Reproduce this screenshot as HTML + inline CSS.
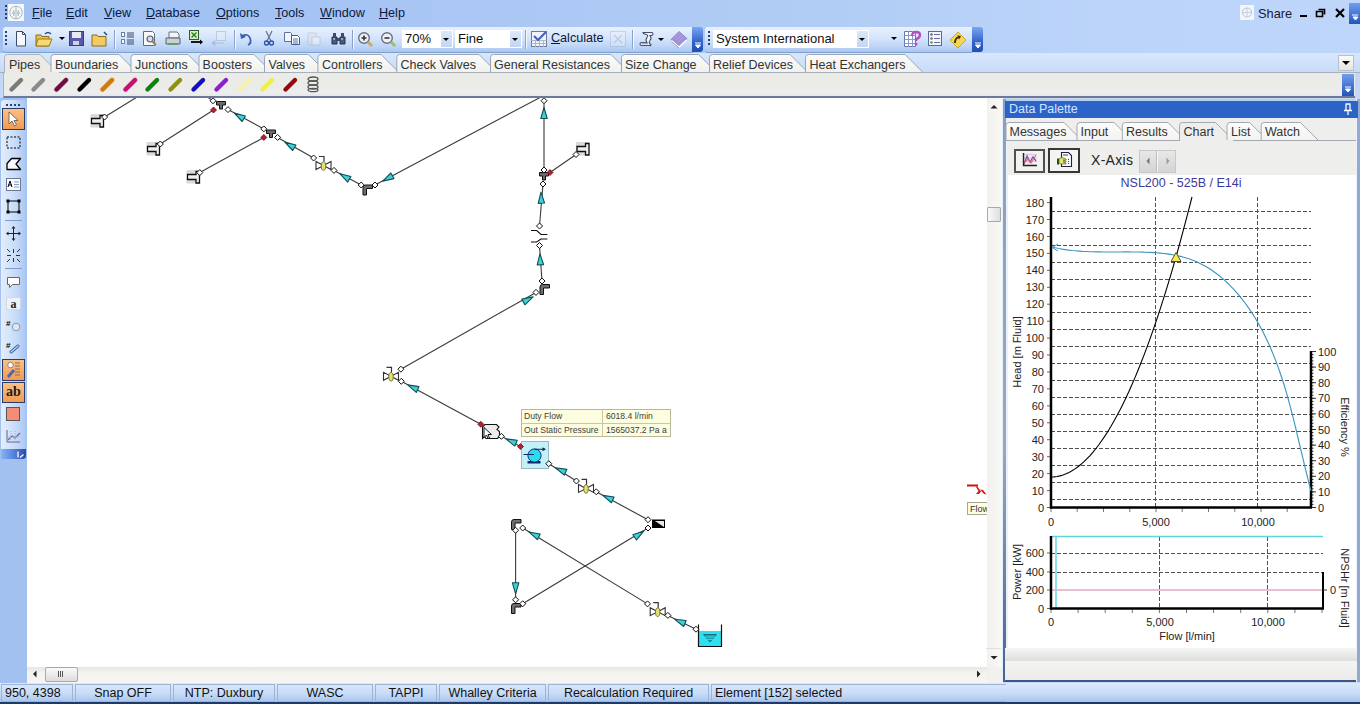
<!DOCTYPE html>
<html><head><meta charset="utf-8">
<style>
*{box-sizing:border-box;margin:0;padding:0}
html,body{width:1360px;height:704px;overflow:hidden}
body{position:relative;background:#c3d8f6;font-family:"Liberation Sans",sans-serif;font-size:12px;color:#000}
.a{position:absolute}
svg{position:absolute;overflow:visible}
#menubar{left:0;top:0;width:1360px;height:53px;background:linear-gradient(90deg,#a2c1f2 0px,#a2c2f4 215px,#a9c6f4 435px,#b1cdf5 815px,#bcd4fa 1115px,#bfd6fa 1360px)}
.mi{position:absolute;top:6px;font-size:12.6px;color:#0c1840;white-space:nowrap}
.tb{position:absolute;top:27px;height:25px;border-radius:3px 0 0 3px;background:linear-gradient(#e8f1fe 0%,#d7e6fb 40%,#c0d7f8 75%,#a8c5f1 100%);box-shadow:0 1px 0 #7f9fd0}
.grip{position:absolute;top:27px;width:11px;height:25px;background:linear-gradient(#79a6f3,#3463c8 60%,#2050b0);border-radius:0 3px 3px 0}
.gd{position:absolute;width:2px;height:2px;background:#27417a}
.sep{position:absolute;top:30px;width:1px;height:19px;background:#8aa2cc;box-shadow:1px 0 0 #f4f8ff}
.combo{position:absolute;top:30px;height:18px;background:#fff;font-size:13px;line-height:17px;padding-left:3px;color:#111;white-space:nowrap}
.cdd{position:absolute;top:1px;right:1px;width:11px;height:16px;background:linear-gradient(#dce8fa,#c2d6f4)}
.cdd:after,.darr:after{content:"";position:absolute;left:2px;top:7px;border-left:3.5px solid transparent;border-right:3.5px solid transparent;border-top:3.5px solid #000}
.darr{position:absolute;width:8px;height:16px}
#tabrow{left:0;top:53px;width:1360px;height:20px;background:linear-gradient(#d8e7fc,#c6dbf8)}
#piperow{left:3px;top:72px;width:1352px;height:26px;background:linear-gradient(#ebebe7 0%,#ebebe7 70%,#eceef0 85%,#e6e8ea 100%);border-bottom:2px solid #6a7a98;border-left:1px solid #a0b4d4}
.tab{position:absolute;top:56px;height:19px;font-size:12.5px;line-height:18px;color:#333;white-space:nowrap}
#canvas{left:27px;top:98px;width:963px;height:569px;background:#fff}
#status{left:0;top:683px;width:1360px;height:21px;background:linear-gradient(#dbe8fb,#c8dcf8 55%,#a8c4ed);border-bottom:2px solid #1d3a6a}
.sp{position:absolute;top:684px;height:18px;border:1px solid #9db4d8;font-size:12.5px;color:#111;text-align:center;line-height:17px}
</style></head><body>
<div id="menubar" class="a"></div>
<!-- logo -->
<div class="gd" style="left:5px;top:5px"></div><div class="gd" style="left:5px;top:9px"></div><div class="gd" style="left:5px;top:13px"></div><div class="gd" style="left:5px;top:17px"></div>
<div class="a" style="left:8px;top:4px;width:16px;height:17px;background:#f4f8fc"></div>
<svg style="left:8px;top:4px" width="16" height="17"><circle cx="8" cy="8.5" r="6.3" fill="none" stroke="#a8b4b8" stroke-width="1"/><path d="M4 9h3M8 3v12M9 9h3M6 6q-1 3 0 6M10 6q1 3 0 6" stroke="#a8b4b8" fill="none"/></svg>
<div class="mi" style="left:32px"><u>F</u>ile</div>
<div class="mi" style="left:66px"><u>E</u>dit</div>
<div class="mi" style="left:104px"><u>V</u>iew</div>
<div class="mi" style="left:146px"><u>D</u>atabase</div>
<div class="mi" style="left:216px"><u>O</u>ptions</div>
<div class="mi" style="left:275px"><u>T</u>ools</div>
<div class="mi" style="left:320px"><u>W</u>indow</div>
<div class="mi" style="left:379px"><u>H</u>elp</div>
<!-- right controls -->
<div class="a" style="left:1240px;top:5px;width:14px;height:15px;background:#f2f6fb"></div>
<svg style="left:1240px;top:5px" width="14" height="15"><circle cx="7" cy="7.5" r="4.5" fill="none" stroke="#b8c4cc"/><path d="M7 3v9M2.5 7.5h9" stroke="#c8d0d8"/></svg>
<div class="mi" style="left:1258px;top:6px;color:#1a1a30;font-size:12.8px">Share</div>
<div class="a" style="left:1300px;top:15px;width:7px;height:2px;background:#000"></div>
<svg style="left:1315px;top:8px" width="11" height="10"><path d="M3.5 1.5h6v5M1.5 3.5h6v5h-6z" fill="none" stroke="#000" stroke-width="1.6"/></svg>
<svg style="left:1335px;top:8px" width="10" height="10"><path d="M1 1l8 8M9 1l-8 8" stroke="#000" stroke-width="2.2"/></svg>
<div class="a" style="left:1349px;top:3px;width:11px;height:21px;background:linear-gradient(#6f9ef0,#2554b8)"></div>
<svg style="left:1351px;top:14px" width="8" height="8"><path d="M1 1h6M2 3h5l-2.5 3z" stroke="#fff" fill="#fff" stroke-width="1"/></svg>
<!-- toolbar 1 -->
<div class="tb" style="left:3px;width:690px"></div>
<div class="grip" style="left:692px"></div>
<svg style="left:694px;top:42px" width="8" height="8"><path d="M1 1h6M1.5 3h5l-2.5 3z" stroke="#fff" fill="#fff" stroke-width="1"/></svg>
<div class="gd" style="left:5px;top:31px"></div><div class="gd" style="left:5px;top:35px"></div><div class="gd" style="left:5px;top:39px"></div><div class="gd" style="left:5px;top:43px"></div>
<!-- new -->
<svg style="left:15px;top:31px" width="12" height="16"><path d="M1.5 0.5h6l3 3v11.5h-9z" fill="#f8f8fc" stroke="#3a4a6a"/><path d="M7.5 0.5v3h3" fill="none" stroke="#3a4a6a"/></svg>
<!-- open -->
<svg style="left:35px;top:31px" width="18" height="16"><path d="M1 4h5l1 1.5h7v9.5H1z" fill="#e8c050" stroke="#8a6a20"/><path d="M3 8h14l-3 7H1z" fill="#fad870" stroke="#9a7a20"/><path d="M10 3q3-3 6 0" stroke="#2a4a8a" fill="none" stroke-width="1.3"/></svg>
<div class="darr" style="left:57px;top:30px"></div>
<!-- save -->
<svg style="left:69px;top:31px" width="15" height="15"><rect x="0.5" y="0.5" width="14" height="14" fill="#5a5aa8" stroke="#3a3a80"/><rect x="3" y="1" width="9" height="6" fill="#e8e8f4"/><rect x="4" y="10" width="6" height="4" fill="#d0d0e8"/></svg>
<!-- folder -->
<svg style="left:91px;top:31px" width="17" height="16"><path d="M1 4h5l1 1.5h8v9.5H1z" fill="#f2cc60" stroke="#8a6a20"/><path d="M13 1l3 3" stroke="#2a4a8a" stroke-width="1.5"/></svg>
<div class="sep" style="left:114px"></div>
<!-- list -->
<svg style="left:121px;top:32px" width="14" height="13"><rect x="0.5" y="0.5" width="3" height="4" fill="#fff" stroke="#6a80a8"/><rect x="0.5" y="7.5" width="3" height="4" fill="#fff" stroke="#6a80a8"/><path d="M6 1h7M6 3h7M6 5h7M6 8h7M6 10h7M6 12h7" stroke="#3a4a70"/></svg>
<!-- print preview -->
<svg style="left:143px;top:31px" width="15" height="16"><path d="M0.5 0.5h9l2 2v12h-11z" fill="#fafafc" stroke="#5a6a8a"/><circle cx="7" cy="8" r="3" fill="#dde" stroke="#505a70" stroke-width="1.2"/><path d="M9 10l4 4" stroke="#a08050" stroke-width="2"/></svg>
<!-- print -->
<svg style="left:165px;top:31px" width="16" height="16"><path d="M4 1h8l2 2v4H4z" fill="#f4f4f8" stroke="#6a7080"/><path d="M1 7h14v6H1z" fill="#c8d0d8" stroke="#5a6070"/><path d="M3 12h10v2H3z" fill="#60a060"/></svg>
<!-- excel -->
<svg style="left:189px;top:30px" width="15" height="17"><rect x="0.5" y="0.5" width="9" height="9" fill="#d8f0c0" stroke="#305a30"/><path d="M2.5 2.5l5 5M7.5 2.5l-5 5" stroke="#208020" stroke-width="1.3"/><path d="M2 12h10" stroke="#000" stroke-width="1.8"/><path d="M11 9.5l3 2.5-3 2.5z" fill="#000"/></svg>
<svg style="left:211px;top:31px" width="16" height="15" opacity="0.45"><rect x="5.5" y="0.5" width="9" height="9" fill="#e8eef4" stroke="#9aa8b8"/><path d="M3 12h10M1 12l3-2v4z" stroke="#9ab0c8" stroke-width="1.5"/></svg>
<div class="sep" style="left:234px"></div>
<!-- undo -->
<svg style="left:240px;top:32px" width="13" height="14"><path d="M2 4q6-3 8 2t-2 7" fill="none" stroke="#3a60b0" stroke-width="1.8"/><path d="M0 1l1 6 5-2z" fill="#3a60b0"/></svg>
<!-- cut -->
<svg style="left:264px;top:31px" width="10" height="15"><path d="M2 0l5 10M8 0l-5 10" stroke="#607090" stroke-width="1.2"/><circle cx="2.5" cy="12" r="2" fill="none" stroke="#2a50a8" stroke-width="1.3"/><circle cx="7.5" cy="12" r="2" fill="none" stroke="#2a50a8" stroke-width="1.3"/></svg>
<!-- copy -->
<svg style="left:284px;top:32px" width="16" height="13"><path d="M0.5 0.5h6l1 1v8h-7z" fill="#f4f4fa" stroke="#6070a0"/><path d="M7.5 3.5h6l2 2v7h-8z" fill="#fff" stroke="#4a5a90"/><path d="M9 7h5M9 9h5M9 11h5" stroke="#5070b0"/></svg>
<svg style="left:307px;top:32px" width="14" height="14" opacity="0.35"><path d="M1 1h8v12H1z" fill="#e0e0e0" stroke="#a0a0a8"/><path d="M5 5h8v8H5z" fill="#fff" stroke="#a0a0b0"/></svg>
<!-- find -->
<svg style="left:331px;top:32px" width="15" height="13"><path d="M1 5h5v7H1zM9 5h5v7H9z" fill="#4a5a80" stroke="#2a3050"/><path d="M2 1h3v4H2zM10 1h3v4h-3zM6 6h3v3H6z" fill="#3a4a70"/><path d="M2 7h2M10 7h2" stroke="#e0e8f8"/></svg>
<div class="sep" style="left:352px"></div>
<!-- zoom in/out -->
<svg style="left:357px;top:31px" width="17" height="17"><circle cx="7" cy="7" r="5.3" fill="#eef0f8" stroke="#6a7080" stroke-width="1.4"/><path d="M4.5 7h5M7 4.5v5" stroke="#333" stroke-width="1.6"/><path d="M11 11l4 4" stroke="#d0a860" stroke-width="3"/></svg>
<svg style="left:380px;top:31px" width="17" height="17"><circle cx="7" cy="7" r="5.3" fill="#eef0f8" stroke="#6a7080" stroke-width="1.4"/><path d="M4.5 7h5" stroke="#333" stroke-width="1.6"/><path d="M11 11l4 4" stroke="#a0c060" stroke-width="3"/></svg>
<div class="combo" style="left:402px;width:51px">70%<div class="cdd"></div></div>
<div class="combo" style="left:455px;width:67px">Fine<div class="cdd"></div></div>
<div class="sep" style="left:525px"></div>
<!-- calculate -->
<svg style="left:531px;top:31px" width="16" height="16"><rect x="0.5" y="0.5" width="15" height="15" fill="#f0f4fa" stroke="#6a7a98"/><path d="M0.5 9.5h15M0.5 12.5h15M4.5 9v7M8.5 9v7M12.5 9v7" stroke="#a8b8d0"/><path d="M3 5l4 4 8-8" fill="none" stroke="#4860c0" stroke-width="2.2"/></svg>
<div class="mi" style="left:551px;top:31px;color:#10183a"><u>C</u>alculate</div>
<svg style="left:610px;top:31px" width="16" height="16" opacity="0.3"><rect x="0.5" y="0.5" width="15" height="15" fill="#f0f4fa" stroke="#8a9ab8"/><path d="M4 4l8 8M12 4l-8 8" stroke="#8a9ab8" stroke-width="1.5"/></svg>
<div class="sep" style="left:632px"></div>
<svg style="left:639px;top:31px" width="15" height="16"><path d="M4 1.5H12.5Q14 1.5 14 3T12.5 4.5H11Q13 7 11 9.5T12 13.5Q12 15 10.5 14.5H2.5Q1 14.5 1 13T2.5 11.5H8Q6 9 8 6.5T6 3Q4.5 3 4 1.5Z" fill="#f2f4fa" stroke="#464e6e" stroke-width="1.1"/><path d="M2.5 12.5H9" stroke="#9aa8c8" stroke-width="1.5"/></svg>
<div class="darr" style="left:656px;top:31px"></div>
<svg style="left:670px;top:30px" width="18" height="18"><path d="M1 9.5L9 1.5 17 8.5 9 16.5Z" fill="#a090d8" stroke="#8878c0" stroke-width="0.8"/><path d="M1.5 10.5L9 17 16.5 10" fill="none" stroke="#ffffff" stroke-width="1.4"/><path d="M1.5 11.5L9 18" stroke="#8a82b0" stroke-width="0.8"/><path d="M4 8l6-5.5M6 10l6-5.5M8 12l6-5.5" stroke="#b8a8e8" stroke-width="0.8"/></svg>
<!-- toolbar 2 -->
<div class="tb" style="left:705px;width:267px"></div>
<div class="grip" style="left:972px"></div>
<svg style="left:974px;top:42px" width="8" height="8"><path d="M1 1h6M1.5 3h5l-2.5 3z" stroke="#fff" fill="#fff" stroke-width="1"/></svg>
<div class="gd" style="left:708px;top:31px"></div><div class="gd" style="left:708px;top:35px"></div><div class="gd" style="left:708px;top:39px"></div><div class="gd" style="left:708px;top:43px"></div>
<div class="combo" style="left:713px;width:156px">System International<div class="cdd"></div></div>
<div class="darr" style="left:889px;top:30px"></div>
<svg style="left:904px;top:31px" width="17" height="16"><path d="M0.5 0.5h11v15h-11z" fill="#fff" stroke="#6a7aa8"/><path d="M0.5 4.5h11M0.5 8.5h11M0.5 12.5h11M4.5 0v16M8.5 0v16" stroke="#8a9ac8"/><path d="M8 5q0-4 4-4t4 3-4 4v2" fill="none" stroke="#b050c0" stroke-width="2.4"/><circle cx="12" cy="13" r="1.5" fill="#b050c0"/></svg>
<svg style="left:928px;top:31px" width="14" height="15"><rect x="0.5" y="0.5" width="13" height="14" fill="#f4f4fc" stroke="#5a6a98"/><circle cx="3.5" cy="3.5" r="1.3" fill="#6a6a8a"/><circle cx="3.5" cy="7.5" r="1.3" fill="#8a6a6a"/><circle cx="3.5" cy="11.5" r="1.3" fill="#7a8a6a"/><path d="M6 3.5h6M6 7.5h6M6 11.5h6" stroke="#6070a0"/></svg>
<svg style="left:949px;top:31px" width="18" height="18"><path d="M9 1l8 8-8 8-8-8z" fill="#f6d850" stroke="#c8a830"/><path d="M6 12q0-5 4-6" fill="none" stroke="#402a10" stroke-width="1.8"/><path d="M8.5 4l3.5 1.5-2 3z" fill="#402a10"/></svg>
<div id="tabrow" class="a"></div>
<div id="piperow" class="a"></div>
<svg style="left:0;top:53px" width="1360" height="22">
<defs><linearGradient id="tg" x1="0" y1="0" x2="0" y2="1"><stop offset="0" stop-color="#fcfcfb"/><stop offset="1" stop-color="#f0f0ec"/></linearGradient></defs>
<path d="M4.5,19.5 V4.5 Q4.5,1.5 7.5,1.5 H40 L58.0,19.5 Z" fill="#ebeae5" stroke="none"/>
<path d="M4.5,19.5 V4.5 Q4.5,1.5 7.5,1.5 H40 L58.0,19.5" fill="none" stroke="#a8b4c8"/>
<path d="M51.0,19.5 V4.5 Q51.0,1.5 54.0,1.5 H119 L137.0,19.5 Z" fill="url(#tg)" stroke="none"/>
<path d="M51.0,19.5 V4.5 Q51.0,1.5 54.0,1.5 H119 L137.0,19.5" fill="none" stroke="#9aa6b8"/>
<path d="M131.0,19.5 V4.5 Q131.0,1.5 134.0,1.5 H188 L206.0,19.5 Z" fill="url(#tg)" stroke="none"/>
<path d="M131.0,19.5 V4.5 Q131.0,1.5 134.0,1.5 H188 L206.0,19.5" fill="none" stroke="#9aa6b8"/>
<path d="M199.0,19.5 V4.5 Q199.0,1.5 202.0,1.5 H254 L272.0,19.5 Z" fill="url(#tg)" stroke="none"/>
<path d="M199.0,19.5 V4.5 Q199.0,1.5 202.0,1.5 H254 L272.0,19.5" fill="none" stroke="#9aa6b8"/>
<path d="M264.5,19.5 V4.5 Q264.5,1.5 267.5,1.5 H308.5 L326.5,19.5 Z" fill="url(#tg)" stroke="none"/>
<path d="M264.5,19.5 V4.5 Q264.5,1.5 267.5,1.5 H308.5 L326.5,19.5" fill="none" stroke="#9aa6b8"/>
<path d="M317.9,19.5 V4.5 Q317.9,1.5 320.9,1.5 H381 L399.0,19.5 Z" fill="url(#tg)" stroke="none"/>
<path d="M317.9,19.5 V4.5 Q317.9,1.5 320.9,1.5 H381 L399.0,19.5" fill="none" stroke="#9aa6b8"/>
<path d="M396.8,19.5 V4.5 Q396.8,1.5 399.8,1.5 H479 L497.0,19.5 Z" fill="url(#tg)" stroke="none"/>
<path d="M396.8,19.5 V4.5 Q396.8,1.5 399.8,1.5 H479 L497.0,19.5" fill="none" stroke="#9aa6b8"/>
<path d="M490.5,19.5 V4.5 Q490.5,1.5 493.5,1.5 H611 L629.0,19.5 Z" fill="url(#tg)" stroke="none"/>
<path d="M490.5,19.5 V4.5 Q490.5,1.5 493.5,1.5 H611 L629.0,19.5" fill="none" stroke="#9aa6b8"/>
<path d="M621.5,19.5 V4.5 Q621.5,1.5 624.5,1.5 H698.6 L716.6,19.5 Z" fill="url(#tg)" stroke="none"/>
<path d="M621.5,19.5 V4.5 Q621.5,1.5 624.5,1.5 H698.6 L716.6,19.5" fill="none" stroke="#9aa6b8"/>
<path d="M709.5,19.5 V4.5 Q709.5,1.5 712.5,1.5 H790 L808.0,19.5 Z" fill="url(#tg)" stroke="none"/>
<path d="M709.5,19.5 V4.5 Q709.5,1.5 712.5,1.5 H790 L808.0,19.5" fill="none" stroke="#9aa6b8"/>
<path d="M805.5,19.5 V4.5 Q805.5,1.5 808.5,1.5 H905 L923.0,19.5 Z" fill="url(#tg)" stroke="none"/>
<path d="M805.5,19.5 V4.5 Q805.5,1.5 808.5,1.5 H905 L923.0,19.5" fill="none" stroke="#9aa6b8"/>
<path d="M0 19.5H1360" stroke="#a8b0bc"/>
</svg>
<div class="tab" style="left:9px">Pipes</div>
<div class="tab" style="left:55px">Boundaries</div>
<div class="tab" style="left:135px">Junctions</div>
<div class="tab" style="left:202.6px">Boosters</div>
<div class="tab" style="left:268.5px">Valves</div>
<div class="tab" style="left:322px">Controllers</div>
<div class="tab" style="left:400.5px">Check Valves</div>
<div class="tab" style="left:494px">General Resistances</div>
<div class="tab" style="left:625px">Size Change</div>
<div class="tab" style="left:713px">Relief Devices</div>
<div class="tab" style="left:809.5px">Heat Exchangers</div>
<div class="a" style="left:5px;top:72px;width:54px;height:2px;background:#ebeae5"></div>
<div class="a" style="left:1338px;top:55px;width:16px;height:16px;background:linear-gradient(#fafafa,#e4e4e0);border:1px solid #b8c0cc"></div>
<svg style="left:1341px;top:60px" width="10" height="6"><path d="M1 1h8l-4 4z" fill="#000"/></svg>
<div class="a" style="left:1342px;top:74px;width:12px;height:22px;background:linear-gradient(#6f9ef0,#2554b8)"></div>
<svg style="left:1344px;top:86px" width="8" height="8"><path d="M1 1h6M1.5 3h5l-2.5 3z" stroke="#fff" fill="#fff" stroke-width="1"/></svg>
<svg style="left:9px;top:77px" width="15" height="15"><path d="M2.5 12.5L12 3" stroke="#7a7a7a" stroke-width="4.4" stroke-linecap="round"/><path d="M1 12h3" stroke="#7a7a7a" stroke-width="2"/><path d="M12 1.5v3" stroke="#7a7a7a" stroke-width="2"/></svg>
<svg style="left:31px;top:77px" width="15" height="15"><path d="M2.5 12.5L12 3" stroke="#8a8a8a" stroke-width="4.4" stroke-linecap="round"/></svg>
<svg style="left:54px;top:77px" width="15" height="15"><path d="M2.5 12.5L12 3" stroke="#f0a0d0" stroke-width="5.5" stroke-linecap="round" opacity="0.5"/><path d="M2.5 12.5L12 3" stroke="#6a1040" stroke-width="4.4" stroke-linecap="round"/><path d="M1 12h3" stroke="#6a1040" stroke-width="2"/><path d="M12 1.5v3" stroke="#6a1040" stroke-width="2"/></svg>
<svg style="left:77px;top:77px" width="15" height="15"><path d="M2.5 12.5L12 3" stroke="#000" stroke-width="4.4" stroke-linecap="round"/></svg>
<svg style="left:100px;top:77px" width="15" height="15"><path d="M2.5 12.5L12 3" stroke="#f8c070" stroke-width="5.5" stroke-linecap="round" opacity="0.5"/><path d="M2.5 12.5L12 3" stroke="#d07a10" stroke-width="4.4" stroke-linecap="round"/></svg>
<svg style="left:123px;top:77px" width="15" height="15"><path d="M2.5 12.5L12 3" stroke="#f8a0d0" stroke-width="5.5" stroke-linecap="round" opacity="0.5"/><path d="M2.5 12.5L12 3" stroke="#c01070" stroke-width="4.4" stroke-linecap="round"/></svg>
<svg style="left:145px;top:77px" width="15" height="15"><path d="M2.5 12.5L12 3" stroke="#108010" stroke-width="4.4" stroke-linecap="round"/></svg>
<svg style="left:168px;top:77px" width="15" height="15"><path d="M2.5 12.5L12 3" stroke="#909010" stroke-width="4.4" stroke-linecap="round"/></svg>
<svg style="left:191px;top:77px" width="15" height="15"><path d="M2.5 12.5L12 3" stroke="#1010c0" stroke-width="4.4" stroke-linecap="round"/></svg>
<svg style="left:214px;top:77px" width="15" height="15"><path d="M2.5 12.5L12 3" stroke="#8a20d0" stroke-width="4.4" stroke-linecap="round"/></svg>
<svg style="left:237px;top:77px" width="15" height="15"><path d="M2.5 12.5L12 3" stroke="#f4f0b0" stroke-width="4.4" stroke-linecap="round"/></svg>
<svg style="left:260px;top:77px" width="15" height="15"><path d="M2.5 12.5L12 3" stroke="#f0f040" stroke-width="4.4" stroke-linecap="round"/></svg>
<svg style="left:283px;top:77px" width="15" height="15"><path d="M2.5 12.5L12 3" stroke="#900a10" stroke-width="4.4" stroke-linecap="round"/></svg>
<svg style="left:306px;top:76px" width="14" height="17"><g fill="none" stroke="#555" stroke-width="1.3"><ellipse cx="7" cy="3" rx="5" ry="2"/><ellipse cx="7" cy="7" rx="5" ry="2"/><ellipse cx="7" cy="11" rx="5" ry="2"/><ellipse cx="7" cy="14" rx="5" ry="1.7"/></g></svg>
<!-- left dock -->
<div class="a" style="left:0;top:98px;width:27px;height:585px;background:#a3c1f0"></div>
<div class="a" style="left:1px;top:100px;width:25px;height:359px;border-radius:3px 3px 0 0;background:linear-gradient(90deg,#e3eefd,#c6dbf8 60%,#a9c6f2)"></div>
<div class="gd" style="left:6px;top:104px"></div><div class="gd" style="left:10px;top:104px"></div><div class="gd" style="left:14px;top:104px"></div><div class="gd" style="left:18px;top:104px"></div>
<div class="a" style="left:2px;top:108px;width:23px;height:22px;background:linear-gradient(#fbc088,#f29a50);border:1px solid #2b3a66"></div>
<svg style="left:8px;top:111px" width="12" height="16"><path d="M1 1v12l3-3 2.5 5 2-1-2.5-4.5h4z" fill="#fff" stroke="#555" stroke-width="0.8"/></svg>
<svg style="left:6px;top:136px" width="15" height="13"><rect x="1" y="1" width="13" height="11" fill="none" stroke="#000" stroke-dasharray="2 1.5"/></svg>
<svg style="left:6px;top:157px" width="15" height="14"><path d="M5.5 1.5h9l-4.5 5.5 4.5 5.5H1v-6z" fill="#f8f8fc" stroke="#000" stroke-width="1.3" stroke-linejoin="round"/></svg>
<svg style="left:6px;top:178px" width="15" height="14"><rect x="0.5" y="0.5" width="14" height="12" fill="#fafcff" stroke="#6a7a98"/><path d="M2 9l2-6 2 6M2.6 7h3" stroke="#000" fill="none"/><path d="M8 4h5M8 6.5h5M8 9h5" stroke="#8a9ab8"/></svg>
<svg style="left:6px;top:199px" width="15" height="15"><rect x="2" y="2" width="11" height="11" fill="none" stroke="#000"/><rect x="0.5" y="0.5" width="3" height="3" fill="#000"/><rect x="11.5" y="0.5" width="3" height="3" fill="#000"/><rect x="0.5" y="11.5" width="3" height="3" fill="#000"/><rect x="11.5" y="11.5" width="3" height="3" fill="#000"/></svg>
<div class="a" style="left:5px;top:220px;width:17px;height:1px;background:#7f9ccc"></div>
<svg style="left:6px;top:226px" width="15" height="15"><path d="M7.5 1v13M1 7.5h13" stroke="#222"/><path d="M7.5 0l-2 2.5h4zM7.5 15l-2-2.5h4zM0 7.5l2.5-2v4zM15 7.5l-2.5-2v4z" fill="#222"/></svg>
<svg style="left:6px;top:248px" width="15" height="15"><path d="M7.5 1v4M7.5 10v4M1 7.5h4M10 7.5h4M1 1l3 3M14 1l-3 3M1 14l3-3M14 14l-3-3" stroke="#333"/></svg>
<div class="a" style="left:5px;top:268px;width:17px;height:1px;background:#7f9ccc"></div>
<svg style="left:6px;top:276px" width="15" height="13"><path d="M1.5 1.5h12v7h-7l-3 3v-3h-2z" fill="#fff" stroke="#666"/></svg>
<svg style="left:6px;top:297px" width="15" height="13"><rect x="0.5" y="0.5" width="14" height="12" fill="#eef2f8" stroke="#c0c8d8" stroke-dasharray="1 1"/><text x="7.5" y="10.5" font-family="Liberation Serif" font-size="12" font-weight="bold" text-anchor="middle" fill="#222">a</text></svg>
<svg style="left:6px;top:318px" width="15" height="14"><text x="0" y="8" font-family="Liberation Sans" font-size="8" font-weight="bold" fill="#000">#</text><circle cx="10" cy="9" r="3.8" fill="#dfe6f0" stroke="#8898b0"/></svg>
<svg style="left:6px;top:340px" width="15" height="14"><text x="0" y="8" font-family="Liberation Sans" font-size="8" font-weight="bold" fill="#000">#</text><path d="M5 12l7-6" stroke="#3a5aa8" stroke-width="3" stroke-linecap="round"/><path d="M5 12l7-6" stroke="#c8d8f0" stroke-width="1.2" stroke-linecap="round"/></svg>
<div class="a" style="left:2px;top:359px;width:23px;height:22px;background:linear-gradient(#fbc088,#f29a50);border:1px solid #2b3a66"></div>
<svg style="left:6px;top:361px" width="16" height="18"><circle cx="4.5" cy="4" r="2.8" fill="#fff" stroke="#888"/><path d="M2 16l6-7" stroke="#4a6ab0" stroke-width="3"/><path d="M9 2h5M9 5h5M9 8h5M9 11h5M9 14h5" stroke="#8a6a50"/></svg>
<div class="a" style="left:2px;top:382px;width:23px;height:21px;background:linear-gradient(#fbc088,#f29a50);border:1px solid #2b3a66"></div>
<div class="a" style="left:3px;top:382px;width:21px;height:20px;font-family:'Liberation Serif';font-size:14px;font-weight:bold;text-align:center;line-height:20px;color:#1a1a1a">ab</div>
<div class="a" style="left:6px;top:407px;width:14px;height:14px;background:#f48c78;border:1px solid #555"></div>
<svg style="left:6px;top:429px" width="15" height="14"><path d="M1 1v12h13" stroke="#5a6a8a" fill="none"/><path d="M2 11l4-4 3 2 5-5" stroke="#7a5ab0" fill="none" stroke-width="1.2"/><path d="M2 8h12M5 2v10M9 2v10" stroke="#a8b4cc" stroke-dasharray="1 1"/></svg>
<div class="a" style="left:1px;top:449px;width:25px;height:10px;border-radius:0 0 3px 0;background:linear-gradient(90deg,#8ab2f4,#5a88e4 45%,#2a4aa4)"></div>
<svg style="left:16px;top:451px" width="9" height="8"><path d="M2 0.5v6" stroke="#fff" stroke-width="1.3"/><path d="M4 6.5l3.5-3" stroke="#fff" stroke-width="1.2"/></svg>
<!-- canvas -->
<div class="a" style="left:27px;top:98px;width:960px;height:569px;background:#fff"></div>
<!-- vscroll -->
<div class="a" style="left:987px;top:98px;width:16px;height:569px;background:linear-gradient(90deg,#f2f1ee,#faf9f6)"></div>
<svg style="left:990px;top:104px" width="8" height="6"><path d="M0.5 4.5l3.5-3.5 3.5 3.5z" fill="#222"/></svg>
<div class="a" style="left:987px;top:207px;width:14px;height:15px;border:1px solid #a8a8a8;border-radius:1px;background:linear-gradient(90deg,#fafafa,#dedede)"></div>
<svg style="left:990px;top:655px" width="8" height="6"><path d="M0.5 1l3.5 3.5 3.5-3.5z" fill="#222"/></svg>
<div class="a" style="left:986px;top:648px;width:15px;height:1px;background:#e0e0e0"></div>
<div class="a" style="left:987px;top:667px;width:16px;height:16px;background:#f2f1ed"></div>
<!-- hscroll -->
<div class="a" style="left:27px;top:667px;width:960px;height:16px;background:linear-gradient(#e8e7e2,#f4f3ef 40%,#f6f5f2)"></div>
<svg style="left:32px;top:670px" width="6" height="8"><path d="M4.5 0.5l-3.5 3.5 3.5 3.5z" fill="#222"/></svg>
<div class="a" style="left:45px;top:667px;width:33px;height:15px;border:1px solid #a8a8a8;border-radius:2px;background:linear-gradient(#fafafa,#dcdcdc)"></div>
<svg style="left:57px;top:671px" width="8" height="6"><path d="M1.5 0v6M3.5 0v6M5.5 0v6" stroke="#555"/></svg>
<svg style="left:976px;top:670px" width="6" height="8"><path d="M1 0.5l3.5 3.5-3.5 3.5z" fill="#222"/></svg>
<!-- status bar -->
<div id="status" class="a"></div>
<div class="sp" style="left:1px;width:72px;text-align:left;padding-left:3px">950, 4398</div>
<div class="sp" style="left:75px;width:96px">Snap OFF</div>
<div class="sp" style="left:173px;width:102px">NTP: Duxbury</div>
<div class="sp" style="left:277px;width:96px">WASC</div>
<div class="sp" style="left:375px;width:62px">TAPPI</div>
<div class="sp" style="left:439px;width:107px">Whalley Criteria</div>
<div class="sp" style="left:548px;width:161px">Recalculation Required</div>
<div class="sp" style="left:711px;width:295px;text-align:left;padding-left:3px;border-right:none">Element [152] selected</div>
<svg style="left:27px;top:98px;overflow:hidden" width="960" height="569" viewBox="27 98 960 569">
<defs>
<g id="nd"><path d="M0,-3 L3,0 0,3 -3,0Z" fill="#fff" stroke="#111" stroke-width="1" stroke-linejoin="round"/></g>
<g id="rd"><path d="M0,-3 L3,0 0,3 -3,0Z" fill="#b02030" stroke="#701018" stroke-width="0.8"/></g>
<g id="ar"><path d="M-6,0 L5,-3.2 5,3.2Z" fill="#40d0d8" stroke="#0c5058" stroke-width="1.1" stroke-linejoin="round"/></g>
<g id="tj"><path d="M-4.5,-3.5H4.5V0H1.5V4H-1.5V0H-4.5Z" fill="#6a6a6a" stroke="#111" stroke-width="1"/></g>
<g id="el"><path d="M-4.5,5V-2.5Q-4.5,-5 -2,-5H5V-1.5H-1V5Z" fill="#6e6e6e" stroke="#111" stroke-width="1"/></g>
<g id="bd"><rect x="0" y="0" width="13.5" height="13.5" fill="#dadada"/><path d="M1,4.5H9.5V1.5H13V13H9.5V9.5H1Z" fill="#eeeeee" stroke="#111" stroke-width="1.3"/></g>
<g id="vl"><path d="M-7.5,-4V4L0,0ZM7.5,-4V4L0,0Z" fill="#fff" stroke="#333" stroke-width="1.1"/><ellipse cx="0" cy="0.5" rx="2.2" ry="4.3" fill="#e6e078" stroke="#707020" stroke-width="0.9"/><path d="M-4.5,-9H0.5V-4" fill="none" stroke="#333" stroke-width="1.2"/></g>
</defs>
<path d="M104.6,117L142,94" stroke="#3a3a3a" stroke-width="1.1" fill="none"/>
<path d="M160.3,144L213.5,110" stroke="#3a3a3a" stroke-width="1.1" fill="none"/>
<path d="M199.8,172.6L263.8,137.4" stroke="#3a3a3a" stroke-width="1.1" fill="none"/>
<path d="M206,96L213,100.8" stroke="#3a3a3a" stroke-width="1.1" fill="none"/>
<path d="M228,109.6L263.8,128.9" stroke="#3a3a3a" stroke-width="1.1" fill="none"/>
<path d="M277.6,137.4L313.6,158" stroke="#3a3a3a" stroke-width="1.1" fill="none"/>
<path d="M334,170.4L361.2,185" stroke="#3a3a3a" stroke-width="1.1" fill="none"/>
<path d="M375,185L541,97" stroke="#3a3a3a" stroke-width="1.1" fill="none"/>
<path d="M544,100.7L544,170" stroke="#3a3a3a" stroke-width="1.1" fill="none"/>
<path d="M550,172.5L576,154.5" stroke="#3a3a3a" stroke-width="1.1" fill="none"/>
<path d="M543,184L539.5,226" stroke="#3a3a3a" stroke-width="1.1" fill="none"/>
<path d="M539.5,245.5L542,281" stroke="#3a3a3a" stroke-width="1.1" fill="none"/>
<path d="M536,292.4L400.9,369.2" stroke="#3a3a3a" stroke-width="1.1" fill="none"/>
<path d="M401.3,381.3L480.8,424.3" stroke="#3a3a3a" stroke-width="1.1" fill="none"/>
<path d="M501.4,436.3L520.5,446.6" stroke="#3a3a3a" stroke-width="1.1" fill="none"/>
<path d="M548.8,463.7L576.4,481" stroke="#3a3a3a" stroke-width="1.1" fill="none"/>
<path d="M596.3,491.8L648,519.7" stroke="#3a3a3a" stroke-width="1.1" fill="none"/>
<path d="M648,528L522.7,603.75" stroke="#3a3a3a" stroke-width="1.1" fill="none"/>
<path d="M515.6,599.8L515.6,530.3" stroke="#3a3a3a" stroke-width="1.1" fill="none"/>
<path d="M522.7,528L647.5,603.9" stroke="#3a3a3a" stroke-width="1.1" fill="none"/>
<path d="M667.9,615.4L696,629.2" stroke="#3a3a3a" stroke-width="1.1" fill="none"/>
<use href="#bd" x="90.5" y="114"/>
<use href="#bd" x="146.5" y="142"/>
<use href="#bd" x="186.5" y="170"/>
<use href="#bd" x="576" y="142"/>
<use href="#tj" x="221" y="105"/>
<use href="#tj" x="271" y="133.5"/>
<use href="#tj" x="544" y="176"/>
<use href="#el" x="367.5" y="190"/>
<use href="#el" x="544.5" y="289.5"/>
<use href="#el" x="516" y="524.5"/>
<use href="#el" x="516" y="608.5"/>
<use href="#vl" x="323.5" y="165.5"/>
<use href="#vl" x="391" y="376.3"/>
<use href="#vl" x="586" y="488.4"/>
<use href="#vl" x="657.7" y="611.7"/>
<use href="#ar" transform="translate(239.5,116.2) rotate(30.6)"/>
<use href="#ar" transform="translate(290.0,145.2) rotate(30.6)"/>
<use href="#ar" transform="translate(345.0,176.8) rotate(30.6)"/>
<use href="#ar" transform="translate(388.0,178.2) rotate(331.2)"/>
<use href="#ar" transform="translate(544.0,113.5) rotate(90.0)"/>
<use href="#ar" transform="translate(541.2,198.2) rotate(87.5)"/>
<use href="#ar" transform="translate(540.2,259.8) rotate(87.5)"/>
<use href="#ar" transform="translate(527.8,299.6) rotate(152.0)"/>
<use href="#ar" transform="translate(413.1,387.4) rotate(25.0)"/>
<use href="#ar" transform="translate(511.4,441.2) rotate(23.0)"/>
<use href="#ar" transform="translate(561.0,470.2) rotate(24.2)"/>
<use href="#ar" transform="translate(608.2,497.8) rotate(24.1)"/>
<use href="#ar" transform="translate(638.8,534.5) rotate(145.5)"/>
<use href="#ar" transform="translate(534.3,534.6) rotate(26.4)"/>
<use href="#ar" transform="translate(515.6,587.8) rotate(270.0)"/>
<use href="#ar" transform="translate(680.3,621.6) rotate(22.4)"/>
<path d="M531,230.5H536.7L541,234.5H547.4M531,242H536.7L541,239H547.4" fill="none" stroke="#111" stroke-width="1.1"/>
<path d="M485,424.5H496.5L499,427L497,429.5L499.5,431.5V436.5L497.5,438.5H486L484.5,436.5L482.5,438.5V427Z" fill="#ececec" stroke="#111" stroke-width="1.1"/>
<path d="M484,427.5V437.5L486.5,435L488,438.5L489.5,438L488,434.5H491.5Z" fill="#fff" stroke="#000" stroke-width="0.9"/>
<rect x="521.5" y="441.5" width="27" height="27" fill="#c4f0f8" stroke="#9ab8c8" stroke-width="1"/>
<path d="M527.5,463.5H540.5V461H527.5Z" fill="#0c2a70"/>
<circle cx="534.5" cy="455.5" r="6.6" fill="#2cdcec" stroke="#0c3a80" stroke-width="1"/>
<path d="M523.5,454.5H534M534.5,449.3H545" stroke="#0c2a60" stroke-width="1.1"/><path d="M546,449.3L542.5,447.3V451.3Z" fill="#0c2a60"/>
<rect x="652.5" y="520" width="12" height="7.5" fill="#000" stroke="#000"/><path d="M655,521H664V527Z" fill="#e8e8e8"/>
<rect x="698.5" y="631" width="23" height="15" fill="#30e0f0"/><path d="M698.5,624.5V646.5H721.5V624.5" fill="none" stroke="#111" stroke-width="1.2"/>
<path d="M703.5,634.5H716.5L710,642Z" fill="#20a0b0" stroke="#106070" stroke-width="0.8"/><path d="M705,637H715M707,639.5H713" stroke="#30e0f0" stroke-width="0.9"/>
<use href="#nd" x="104.6" y="117"/>
<use href="#nd" x="160.3" y="144"/>
<use href="#nd" x="199.8" y="172.6"/>
<use href="#nd" x="213" y="100.8"/>
<use href="#nd" x="228" y="109.6"/>
<use href="#nd" x="263.8" y="128.9"/>
<use href="#nd" x="277.6" y="137.4"/>
<use href="#nd" x="313.6" y="158"/>
<use href="#nd" x="334" y="170.4"/>
<use href="#nd" x="361.2" y="185"/>
<use href="#nd" x="375" y="185"/>
<use href="#nd" x="544" y="100.7"/>
<use href="#nd" x="544" y="170"/>
<use href="#nd" x="543" y="184"/>
<use href="#nd" x="576" y="154.5"/>
<use href="#nd" x="539.5" y="226"/>
<use href="#nd" x="539.5" y="245.5"/>
<use href="#nd" x="542" y="281"/>
<use href="#nd" x="536" y="292.4"/>
<use href="#nd" x="400.9" y="369.2"/>
<use href="#nd" x="401.3" y="381.3"/>
<use href="#nd" x="501.4" y="436.3"/>
<use href="#nd" x="548.8" y="463.7"/>
<use href="#nd" x="576.4" y="481"/>
<use href="#nd" x="596.3" y="491.8"/>
<use href="#nd" x="648" y="519.7"/>
<use href="#nd" x="648" y="528"/>
<use href="#nd" x="522.7" y="603.75"/>
<use href="#nd" x="515.6" y="599.8"/>
<use href="#nd" x="515.6" y="530.3"/>
<use href="#nd" x="522.7" y="528"/>
<use href="#nd" x="647.5" y="603.9"/>
<use href="#nd" x="667.9" y="615.4"/>
<use href="#nd" x="696" y="629.2"/>
<use href="#rd" x="213.5" y="110"/>
<use href="#rd" x="263.8" y="137.4"/>
<use href="#rd" x="550" y="172.5"/>
<use href="#rd" x="480.8" y="424.3"/>
<use href="#rd" x="520.5" y="446.6"/>
<rect x="521.5" y="409.5" width="149" height="27" fill="#fdfde0" stroke="#b8b898"/><path d="M521.5,423.5H670.5M602.5,409.5V436.5" stroke="#c8c8a8"/>
<g font-family="Liberation Sans" font-size="8.6" fill="#404040"><text x="524" y="419">Duty Flow</text><text x="524" y="433">Out Static Pressure</text><text x="606" y="419">6018.4 l/min</text><text x="606" y="433">1565037.2 Pa a</text></g>
<path d="M967,485.5H978" stroke="#d01010" stroke-width="2"/><path d="M977,486L981,491.5L979,494H976L978.5,491L976,487ZM980,489.5L984,494L986.5,494.5L983,490Z" fill="#d81818"/>
<rect x="967.5" y="502.5" width="24" height="12" fill="#fdfde4" stroke="#a8a890"/><text x="970" y="512" font-family="Liberation Sans" font-size="9" fill="#333">Flow</text>
</svg>
<div class="a" style="left:1003px;top:98px;width:357px;height:585px;background:#c9d9ef"></div>
<div class="a" style="left:1003px;top:99px;width:354px;height:583px;background:#eeeeec;border-bottom:2px solid #3e5488;border-top:2px solid #b8d0f4"></div>
<div class="a" style="left:1002px;top:99px;width:1px;height:582px;background:#e2effc"></div>
<div class="a" style="left:1003px;top:99px;width:3px;height:583px;background:linear-gradient(#8aa0c0,#98a8bc 60%,#4a6090)"></div>
<div class="a" style="left:1006px;top:140px;width:2px;height:540px;background:#eef0f8"></div>
<div class="a" style="left:1356px;top:99px;width:1px;height:583px;background:#eef2fc"></div>
<div class="a" style="left:1357px;top:99px;width:3px;height:583px;background:#92aad2"></div>
<div class="a" style="left:1005px;top:101px;width:353px;height:17px;background:#2b63c9"></div>
<div class="a" style="left:1009px;top:101px;font-size:12.5px;line-height:17px;color:#d4e6ff">Data Palette</div>
<svg style="left:1343px;top:103px" width="10" height="12"><path d="M2.5 1h5M3 1.5v6M7 1.5v6M1 7.5h8M5 8v4" stroke="#fff" stroke-width="1.3" fill="none"/></svg>
<svg style="left:0;top:119.5px" width="1360" height="24"><defs><linearGradient id="tg2" x1="0" y1="0" x2="0" y2="1"><stop offset="0" stop-color="#fdfdfc"/><stop offset="1" stop-color="#f2f2f0"/></linearGradient></defs>
<path d="M1006.0,20.5 V5.5 Q1006.0,2.5 1009.0,2.5 H1064 L1082.0,20.5 Z" fill="url(#tg2)"/><path d="M1006.0,20.5 V5.5 Q1006.0,2.5 1009.0,2.5 H1064 L1082.0,20.5" fill="none" stroke="#a4a8b0"/>
<path d="M1077.0,20.5 V5.5 Q1077.0,2.5 1080.0,2.5 H1114 L1132.0,20.5 Z" fill="url(#tg2)"/><path d="M1077.0,20.5 V5.5 Q1077.0,2.5 1080.0,2.5 H1114 L1132.0,20.5" fill="none" stroke="#a4a8b0"/>
<path d="M1122.3,20.5 V5.5 Q1122.3,2.5 1125.3,2.5 H1168 L1186.0,20.5 Z" fill="url(#tg2)"/><path d="M1122.3,20.5 V5.5 Q1122.3,2.5 1125.3,2.5 H1168 L1186.0,20.5" fill="none" stroke="#a4a8b0"/>
<path d="M1179.5,20.5 V5.5 Q1179.5,2.5 1182.5,2.5 H1215.5 L1233.5,20.5 Z" fill="#eeeeec"/><path d="M1179.5,20.5 V5.5 Q1179.5,2.5 1182.5,2.5 H1215.5 L1233.5,20.5" fill="none" stroke="#a4a8b0"/>
<path d="M1227.0,20.5 V5.5 Q1227.0,2.5 1230.0,2.5 H1249.7 L1267.7,20.5 Z" fill="url(#tg2)"/><path d="M1227.0,20.5 V5.5 Q1227.0,2.5 1230.0,2.5 H1249.7 L1267.7,20.5" fill="none" stroke="#a4a8b0"/>
<path d="M1261.2,20.5 V5.5 Q1261.2,2.5 1264.2,2.5 H1300.5 L1318.5,20.5 Z" fill="url(#tg2)"/><path d="M1261.2,20.5 V5.5 Q1261.2,2.5 1264.2,2.5 H1300.5 L1318.5,20.5" fill="none" stroke="#a4a8b0"/>
<path d="M1005 20.5H1356" stroke="#a4a8b0"/>
<path d="M1180 20.5H1233" stroke="#eeeeec" stroke-width="1.5"/>
</svg>
<div class="a" style="left:1009.5px;top:123px;font-size:12.5px;line-height:18px;color:#333">Messages</div>
<div class="a" style="left:1080.5px;top:123px;font-size:12.5px;line-height:18px;color:#333">Input</div>
<div class="a" style="left:1126px;top:123px;font-size:12.5px;line-height:18px;color:#333">Results</div>
<div class="a" style="left:1183.5px;top:123px;font-size:12.5px;line-height:18px;color:#333">Chart</div>
<div class="a" style="left:1231px;top:123px;font-size:12.5px;line-height:18px;color:#333">List</div>
<div class="a" style="left:1265px;top:123px;font-size:12.5px;line-height:18px;color:#333">Watch</div>
<div class="a" style="left:1014px;top:149px;width:31px;height:24px;border:2px solid #505050;background:#f2f2f0"></div>
<svg style="left:1021px;top:152px" width="18" height="16"><path d="M2 2.5H16M2 6H16M2 9.5H16" stroke="#c8c0d8" stroke-width="0.8"/><path d="M3 1v12M7 1v12M11 1v12" stroke="#d8d0e0" stroke-width="0.6"/><path d="M3 12L6 4 9 10 12 5 15 9" stroke="#8050a0" fill="none" stroke-width="1.3"/><path d="M3 11L7 7 10 11 15 3" stroke="#e06090" fill="none" stroke-width="1.1"/><path d="M2.5 1V13.5H16" stroke="#222" fill="none" stroke-width="1.4"/></svg>
<div class="a" style="left:1048px;top:148px;width:32px;height:25px;border:2px solid #383838;background:#f4f4f2"></div>
<svg style="left:1056px;top:151px" width="18" height="18"><path d="M5.5 1.5h7l3 3v11h-10z" fill="#fafafa" stroke="#202040" stroke-width="1.1"/><path d="M7 4h5M12.5 8v1M12.5 10v1M12.5 12v1" stroke="#404060"/><path d="M1 7.5h2v6h-2z" fill="#205020"/><path d="M3 8q2-2 5-1l2 1v1H7l3 1v1H7l3 1v1H5q-2 0-2-2z" fill="#e8e860" stroke="#606020" stroke-width="0.7"/></svg>
<div class="a" style="left:1091px;top:152px;font-size:14px;line-height:17px;color:#222;letter-spacing:0.3px">X-Axis</div>
<div class="a" style="left:1139px;top:150px;width:37px;height:23px;border:1px solid #c8c8c8;background:linear-gradient(#e8e8e8,#d4d4d4)"></div>
<div class="a" style="left:1157px;top:151px;width:1px;height:21px;background:#f8f8f8;box-shadow:-1px 0 0 #bcbcbc"></div>
<svg style="left:1146px;top:157px" width="4" height="8"><path d="M3.5 0.5L0.5 4l3 3.5z" fill="#777"/></svg>
<svg style="left:1166px;top:157px" width="4" height="8"><path d="M0.5 0.5L3.5 4l-3 3.5z" fill="#999"/></svg>
<div class="a" style="left:1008px;top:175px;width:348px;height:473px;background:#fff"></div>
<div class="a" style="left:1005px;top:648px;width:352px;height:13px;background:linear-gradient(#f6f6f5,#dedede)"></div>
<div class="a" style="left:1005px;top:661px;width:352px;height:19px;background:linear-gradient(#f4f4f2,#ebebea)"></div>
<svg style="left:0;top:0" width="1360" height="704" font-family="Liberation Sans" >
<text x="1181" y="187" font-size="12.5" fill="#3b3b9a" text-anchor="middle">NSL200 - 525B / E14i</text>
<path d="M1051,499.5H1311M1051,482.5H1311M1051,465.5H1311M1051,448.5H1311M1051,431.5H1311M1051,414.5H1311M1051,397.5H1311M1051,380.5H1311M1051,363.5H1311M1051,346.5H1311M1051,329.5H1311M1051,312.5H1311M1051,296.5H1311M1051,279.5H1311M1051,262.5H1311M1051,245.5H1311M1051,228.5H1311M1051,211.5H1311" stroke="#505050" stroke-width="1" stroke-dasharray="4 2" fill="none"/>
<path d="M1155.5,197V507M1257.5,197V507" stroke="#505050" stroke-width="1" stroke-dasharray="4 2" fill="none"/>
<g font-size="11" fill="#222"><text x="1044" y="511.5" text-anchor="end">0</text><text x="1044" y="494.6" text-anchor="end">10</text><text x="1044" y="477.6" text-anchor="end">20</text><text x="1044" y="460.7" text-anchor="end">30</text><text x="1044" y="443.7" text-anchor="end">40</text><text x="1044" y="426.8" text-anchor="end">50</text><text x="1044" y="409.9" text-anchor="end">60</text><text x="1044" y="392.9" text-anchor="end">70</text><text x="1044" y="376.0" text-anchor="end">80</text><text x="1044" y="359.0" text-anchor="end">90</text><text x="1044" y="342.1" text-anchor="end">100</text><text x="1044" y="325.2" text-anchor="end">110</text><text x="1044" y="308.2" text-anchor="end">120</text><text x="1044" y="291.3" text-anchor="end">130</text><text x="1044" y="274.3" text-anchor="end">140</text><text x="1044" y="257.4" text-anchor="end">150</text><text x="1044" y="240.5" text-anchor="end">160</text><text x="1044" y="223.5" text-anchor="end">170</text><text x="1044" y="206.6" text-anchor="end">180</text></g>
<path d="M1047,507.5H1051M1047,490.6H1051M1047,473.6H1051M1047,456.7H1051M1047,439.7H1051M1047,422.8H1051M1047,405.9H1051M1047,388.9H1051M1047,372.0H1051M1047,355.0H1051M1047,338.1H1051M1047,321.2H1051M1047,304.2H1051M1047,287.3H1051M1047,270.3H1051M1047,253.4H1051M1047,236.5H1051M1047,219.5H1051M1047,202.6H1051" stroke="#666" stroke-width="1"/>
<path d="M1051.0,508V512M1077.2,508V512M1103.5,508V512M1129.8,508V512M1156.0,508V512M1182.2,508V512M1208.5,508V512M1234.8,508V512M1261.0,508V512M1287.2,508V512" stroke="#777" stroke-width="1"/>
<g font-size="11" fill="#222" text-anchor="middle"><text x="1051" y="526">0</text><text x="1156" y="526">5,000</text><text x="1258" y="526">10,000</text></g>
<g font-size="11" fill="#222"><text x="1318" y="511.5">0</text><text x="1318" y="495.9">10</text><text x="1318" y="480.3">20</text><text x="1318" y="464.7">30</text><text x="1318" y="449.1">40</text><text x="1318" y="433.5">50</text><text x="1318" y="417.9">60</text><text x="1318" y="402.3">70</text><text x="1318" y="386.7">80</text><text x="1318" y="371.1">90</text><text x="1318" y="355.5">100</text></g>
<path d="M1311,507.5H1316M1311,491.9H1316M1311,476.3H1316M1311,460.7H1316M1311,445.1H1316M1311,429.5H1316M1311,413.9H1316M1311,398.3H1316M1311,382.7H1316M1311,367.1H1316M1311,351.5H1316M1311,507.5H1313.5M1311,504.4H1313.5M1311,501.3H1313.5M1311,498.1H1313.5M1311,495.0H1313.5M1311,491.9H1313.5M1311,488.8H1313.5M1311,485.7H1313.5M1311,482.5H1313.5M1311,479.4H1313.5M1311,476.3H1313.5M1311,473.2H1313.5M1311,470.1H1313.5M1311,466.9H1313.5M1311,463.8H1313.5M1311,460.7H1313.5M1311,457.6H1313.5M1311,454.5H1313.5M1311,451.3H1313.5M1311,448.2H1313.5M1311,445.1H1313.5M1311,442.0H1313.5M1311,438.9H1313.5M1311,435.7H1313.5M1311,432.6H1313.5M1311,429.5H1313.5M1311,426.4H1313.5M1311,423.3H1313.5M1311,420.1H1313.5M1311,417.0H1313.5M1311,413.9H1313.5M1311,410.8H1313.5M1311,407.7H1313.5M1311,404.5H1313.5M1311,401.4H1313.5M1311,398.3H1313.5M1311,395.2H1313.5M1311,392.1H1313.5M1311,388.9H1313.5M1311,385.8H1313.5M1311,382.7H1313.5M1311,379.6H1313.5M1311,376.5H1313.5M1311,373.3H1313.5M1311,370.2H1313.5M1311,367.1H1313.5M1311,364.0H1313.5M1311,360.9H1313.5M1311,357.7H1313.5M1311,354.6H1313.5" stroke="#333" stroke-width="1"/>
<path d="M1051,197V508.5" stroke="#000" stroke-width="2.5"/>
<path d="M1050,507.5H1312" stroke="#000" stroke-width="2.5"/>
<path d="M1311,351V508" stroke="#000" stroke-width="2.5"/>
<text transform="translate(1021,352) rotate(-90)" font-size="11" fill="#222" text-anchor="middle">Head [m Fluid]</text>
<text transform="translate(1341,427) rotate(90)" font-size="11" fill="#222" text-anchor="middle">Efficiency %</text>
<path d="M1052.3,247.0 L1055.5,247.8 L1058.8,248.5 L1062.1,249.1 L1065.5,249.6 L1068.8,250.1 L1072.2,250.5 L1075.6,250.8 L1079.0,251.1 L1082.4,251.4 L1085.9,251.5 L1089.4,251.7 L1092.8,251.8 L1096.3,251.9 L1099.8,251.9 L1103.4,252.0 L1106.9,252.0 L1110.4,252.0 L1114.0,252.0 L1117.5,252.0 L1121.1,252.0 L1124.6,251.9 L1128.2,251.9 L1131.7,252.0 L1135.3,252.0 L1138.9,252.0 L1142.4,252.1 L1146.0,252.2 L1149.5,252.4 L1153.1,252.6 L1156.6,252.8 L1160.1,253.1 L1163.6,253.5 L1167.0,253.9 L1170.5,254.4 L1173.9,255.0 L1177.2,255.7 L1180.6,256.4 L1183.8,257.3 L1187.1,258.3 L1190.3,259.3 L1193.4,260.5 L1196.5,261.8 L1199.5,263.2 L1202.5,264.7 L1205.4,266.3 L1208.3,268.0 L1211.1,269.8 L1213.9,271.7 L1216.6,273.7 L1219.3,275.8 L1221.9,277.9 L1224.4,280.2 L1226.9,282.5 L1229.4,284.8 L1231.8,287.3 L1234.1,289.7 L1236.4,292.3 L1238.7,294.9 L1240.8,297.6 L1243.0,300.3 L1245.1,303.0 L1247.1,305.8 L1249.1,308.6 L1251.0,311.5 L1252.9,314.4 L1254.7,317.3 L1256.5,320.3 L1258.2,323.2 L1259.9,326.2 L1261.6,329.3 L1263.2,332.3 L1264.7,335.4 L1266.2,338.5 L1267.7,341.7 L1269.2,344.8 L1270.6,348.0 L1271.9,351.2 L1273.2,354.4 L1274.5,357.6 L1275.8,360.9 L1277.0,364.1 L1278.2,367.4 L1279.4,370.7 L1280.5,374.0 L1281.6,377.3 L1282.7,380.7 L1283.8,384.0 L1284.8,387.4 L1285.8,390.7 L1286.8,394.1 L1287.8,397.5 L1288.7,400.9 L1289.6,404.2 L1290.5,407.6 L1291.4,411.0 L1292.3,414.4 L1293.2,417.8 L1294.0,421.2 L1294.9,424.6 L1295.7,428.0 L1296.5,431.4 L1297.3,434.8 L1298.1,438.2 L1298.9,441.6 L1299.7,445.0 L1300.5,448.3 L1301.3,451.7 L1302.1,455.0 L1302.9,458.4 L1303.7,461.7 L1304.5,465.0 L1305.3,468.3 L1306.1,471.6 L1306.9,474.9 L1307.7,478.2 L1308.5,481.4 L1309.3,484.6 L1310.2,487.8 L1311.0,491.0" stroke="#4096c2" stroke-width="1.15" fill="none" stroke-linejoin="round"/>
<path d="M1058,244L1052,247.5 1058,251" stroke="#3a9ccf" stroke-width="1" fill="none"/>
<path d="M1051.0,477.0 L1054.0,476.9 L1057.0,476.5 L1060.0,475.9 L1063.0,475.0 L1066.0,473.8 L1069.0,472.4 L1072.0,470.8 L1075.0,468.9 L1078.0,466.7 L1081.0,464.3 L1084.0,461.7 L1087.0,458.7 L1090.0,455.6 L1093.0,452.1 L1096.0,448.5 L1099.0,444.5 L1102.0,440.3 L1105.0,435.9 L1108.0,431.2 L1111.0,426.3 L1114.0,421.1 L1117.0,415.6 L1120.0,409.9 L1123.0,403.9 L1126.0,397.7 L1129.0,391.3 L1132.0,384.5 L1135.0,377.6 L1138.0,370.3 L1141.0,362.8 L1144.0,355.1 L1147.0,347.1 L1150.0,338.9 L1153.0,330.4 L1156.0,321.6 L1159.0,312.6 L1162.0,303.4 L1165.0,293.8 L1168.0,284.1 L1171.0,274.1 L1174.0,263.8 L1177.0,253.3 L1180.0,242.5 L1183.0,231.4 L1186.0,220.1 L1189.0,208.6 L1192.0,197.0" stroke="#000" stroke-width="1.1" fill="none"/>
<path d="M1176,252.5L1181,261.5H1171Z" fill="#f4ec50" stroke="#404020" stroke-width="0.9"/>
<path d="M1051,553.5H1323M1051,572.5H1323" stroke="#505050" stroke-dasharray="4 2"/>
<path d="M1159.5,537V608M1267.5,537V608" stroke="#505050" stroke-dasharray="4 2"/>
<path d="M1051,536.5H1323M1056,537V608" stroke="#5ed4e0" stroke-width="1.4"/>
<path d="M1051,590H1323" stroke="#e0a8c8" stroke-width="1.4"/>
<g font-size="11" fill="#222"><text x="1044" y="612.5" text-anchor="end">0</text><text x="1044" y="594.0" text-anchor="end">200</text><text x="1044" y="576.0" text-anchor="end">400</text><text x="1044" y="557.0" text-anchor="end">600</text></g>
<path d="M1047,608.5H1051M1047,590H1051M1047,572H1051M1047,553H1051" stroke="#666"/>
<path d="M1051.0,609V613M1078.1,609V613M1105.2,609V613M1132.3,609V613M1159.4,609V613M1186.5,609V613M1213.6,609V613M1240.7,609V613M1267.8,609V613M1294.9,609V613M1322.0,609V613" stroke="#777"/>
<path d="M1051,536V609.5" stroke="#000" stroke-width="2.5"/>
<path d="M1050,608.5H1324" stroke="#000" stroke-width="2.5"/>
<path d="M1323,572V609" stroke="#000" stroke-width="2"/>
<path d="M1323,590H1327" stroke="#333"/>
<text x="1330" y="594" font-size="11" fill="#222">0</text>
<g font-size="11" fill="#222" text-anchor="middle"><text x="1051" y="626">0</text><text x="1160" y="626">5,000</text><text x="1268" y="626">10,000</text></g>
<text x="1187" y="640" font-size="11" fill="#222" text-anchor="middle">Flow [l/min]</text>
<text transform="translate(1021,572) rotate(-90)" font-size="11" fill="#222" text-anchor="middle">Power [kW]</text>
<text transform="translate(1341,588) rotate(90)" font-size="11" fill="#222" text-anchor="middle">NPSHr [m Fluid]</text>
</svg>
</body></html>
